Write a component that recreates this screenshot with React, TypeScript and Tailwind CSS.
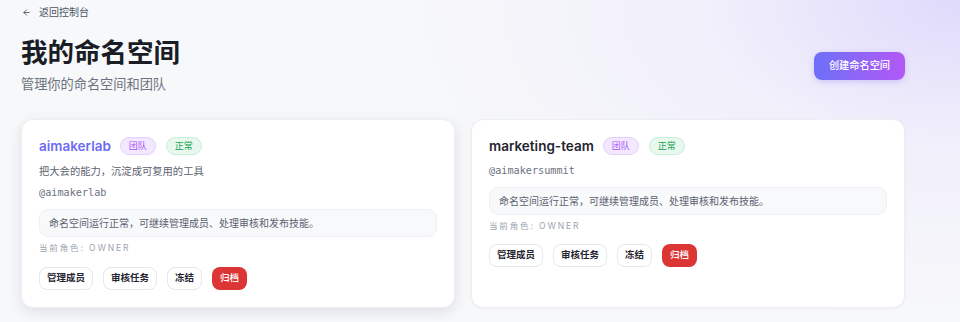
import React from "react";

const font = { fontFamily: 'Inter, "Noto Sans CJK SC", sans-serif' } as const;

type Card = {
  name: string;
  accent: boolean;
  desc?: string;
  handle: string;
  hovered?: boolean;
};

const cards: Card[] = [
  { name: "aimakerlab", accent: true, desc: "把大会的能力，沉淀成可复用的工具", handle: "@aimakerlab", hovered: true },
  { name: "marketing-team", accent: false, handle: "@aimakersummit" },
];

function NsCard({ c }: { c: Card }) {
  return (
    <div
      className={
        "flex-1 h-[189px] rounded-xl bg-white border border-[#eceef2] px-[17px] pt-[17px] " +
        (c.hovered ? "shadow-[0_4px_14px_rgba(15,23,42,0.10)]" : "shadow-[0_1px_3px_rgba(15,23,42,0.04)]")
      }
    >
      <div className="flex items-center h-[18px]">
        <span className={"text-[13.5px] font-semibold leading-[18px] " + (c.accent ? "text-[#6d6af5]" : "text-[#1f2430]")}>
          {c.name}
        </span>
        <span className="ml-[9px] h-[18px] px-[8px] rounded-full bg-[#f3e8ff] border border-[#e5cffd] text-[#a855f7] text-[9px] leading-[16px]">
          团队
        </span>
        <span className="ml-[10px] h-[18px] px-[8px] rounded-full bg-[#e8f8ef] border border-[#c8efd9] text-[#16a34a] text-[9px] leading-[16px]">
          正常
        </span>
      </div>
      {c.desc && <div className="mt-[8px] text-[10.3px] leading-[16px] text-[#5b6270]">{c.desc}</div>}
      <div
        className={(c.desc ? "mt-[6px]" : "mt-[8px]") + " text-[10.2px] leading-[16px] text-[#6b7280]"}
        style={{ fontFamily: '"DejaVu Sans Mono", monospace' }}
      >
        {c.handle}
      </div>
      <div className="mt-[8px] h-[28px] rounded-[9px] bg-[#f8f9fb] border border-[#eef0f3] px-[9px] flex items-center text-[10px] text-[#5b6270]">
        命名空间运行正常，可继续管理成员、处理审核和发布技能。
      </div>
      <div className="mt-[4px] text-[8.5px] leading-[14px] tracking-[0.22em] text-[#9ca3af]">当前角色: OWNER</div>
      <div className={(c.desc ? "mt-[12px]" : "mt-[11px]") + " flex gap-[10px]"}>
        {["管理成员", "审核任务", "冻结"].map((b) => (
          <span
            key={b}
            className="h-[23px] px-[7px] rounded-lg border border-[#e5e7eb] bg-white text-[9.5px] font-semibold text-[#1f2430] flex items-center"
          >
            {b}
          </span>
        ))}
        <span className="h-[23px] px-[8px] rounded-lg bg-[#dc3535] text-[9.5px] font-medium text-white flex items-center">
          归档
        </span>
      </div>
    </div>
  );
}

export default function App() {
  return (
    <div
      className="w-[960px] h-[322px] overflow-hidden bg-[#f7f8fa] relative"
      style={font}
    >
      <div className="absolute inset-0 bg-[radial-gradient(ellipse_560px_320px_at_100%_0%,rgba(196,181,253,0.45),rgba(221,214,254,0.25)_45%,rgba(247,248,250,0)_100%)] pointer-events-none" />
      <div className="relative pl-[21px] w-[905px]">
        <div className="pl-[1px] flex items-center gap-[8px] h-[24px] text-[10px] text-[#4b5563]">
          <svg width="9" height="9" viewBox="0 0 24 24" fill="none" stroke="currentColor" strokeWidth="2.4" strokeLinecap="round" strokeLinejoin="round">
            <path d="M19 12H5" />
            <path d="M12 19l-7-7 7-7" />
          </svg>
          <span>返回控制台</span>
        </div>
        <div className="flex items-start justify-between mt-[11px]">
          <div>
            <h1 className="text-[26.5px] font-bold leading-[34px] text-[#1a1d26]">我的命名空间</h1>
            <div className="mt-[6px] text-[13.2px] leading-[18px] text-[#6b7280]">管理你的命名空间和团队</div>
          </div>
          <button className="mt-[17px] h-[28px] w-[91px] rounded-lg bg-gradient-to-r from-[#6b6ff8] to-[#b057f5] text-white text-[10.2px] font-medium shadow-[0_2px_6px_rgba(139,92,246,0.25)]">
            创建命名空间
          </button>
        </div>
        <div className="mt-[26px] flex gap-[16px]">
          {cards.map((c) => (
            <NsCard key={c.name} c={c} />
          ))}
        </div>
      </div>
    </div>
  );
}
